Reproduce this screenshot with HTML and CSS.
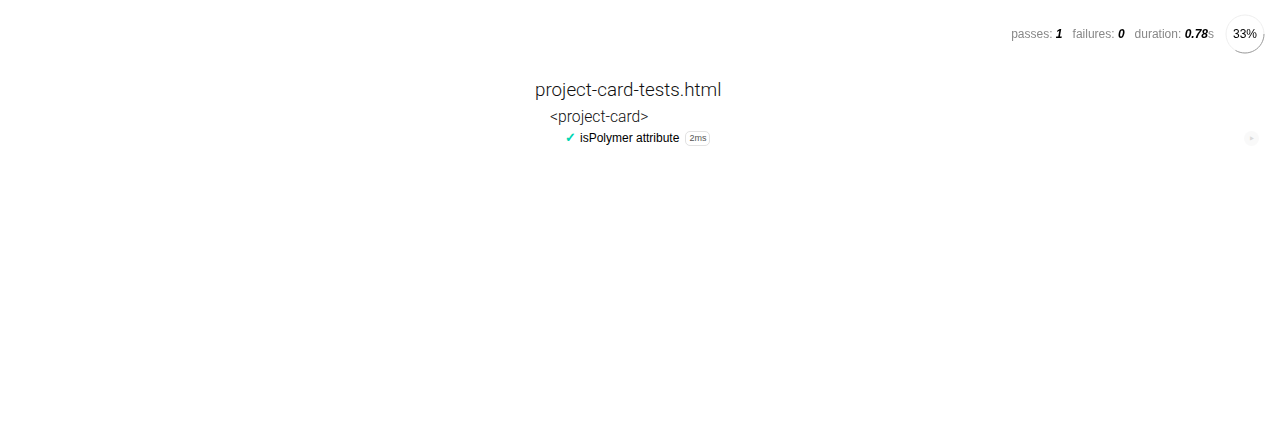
FILE: index.html
```html
<!DOCTYPE html>
<html>
<head>
<meta charset="utf-8">
<link rel="stylesheet" href="styles.css">
</head>
<body>
<div class="mocha">
  <ul class="stats">
    <li class="stat">passes: <em>1</em></li>
    <li class="stat">failures: <em>0</em></li>
    <li class="stat">duration: <em>0.78</em>s</li>
    <li class="progress">
      <svg width="40" height="40" viewBox="0 0 40 40">
        <circle cx="20" cy="20" r="19" fill="#fff" stroke="#eee" stroke-width="1"/>
        <path d="M39 20 A19 19 0 0 1 10.5 36.45" fill="none" stroke="#9f9f9f" stroke-width="1"/>
        <text x="20" y="24" text-anchor="middle" class="pct">33%</text>
      </svg>
    </li>
  </ul>
  <ul class="report">
    <li class="suite">
      <h1 class="title">project-card-tests.html</h1>
      <ul class="suites">
        <li class="suite sub">
          <h1 class="subtitle">&lt;project-card&gt;</h1>
          <ul class="tests">
            <li class="test">
              <h2 class="test-title"><span class="check">✓</span>isPolymer attribute <span class="duration">2ms</span><a class="replay">‣</a></h2>
            </li>
          </ul>
        </li>
      </ul>
    </li>
  </ul>
</div>
</body>
</html>
```
FILE: styles.css
```css
html, body {
  margin: 0;
  padding: 0;
  background: #fff;
}
.mocha {
  font: 20px/1.5 "Liberation Sans", Arial, sans-serif;
  color: #000;
  padding: 75px 20px 60px 535px;
}
.mocha ul {
  list-style: none;
  margin: 0;
  padding: 0;
}
.mocha h1, .mocha h2 {
  margin: 0;
}
.stats {
  position: fixed;
  top: 14px;
  right: 15px;
  font-size: 12px;
  color: #888;
  display: flex;
  align-items: flex-start;
}
.stats .stat {
  margin: 0 5px;
  padding-top: 11px;
  line-height: 18px;
}
.stats .stat:first-child {
  margin-left: 0;
}
.stats em {
  color: #000;
  font-style: italic;
  font-weight: bold;
}
.stats .progress {
  margin-left: 6px;
  width: 40px;
  height: 40px;
}
.progress svg {
  display: block;
}
.pct {
  font: 12px "Liberation Sans", Arial, sans-serif;
  fill: #000;
}
.title {
  font-family: Roboto, "Liberation Sans", sans-serif;
  font-size: 18.8px;
  font-weight: 300;
  color: #111;
  line-height: 30px;
}
.sub {
  margin-left: 15px;
}
.subtitle {
  font-family: Roboto, "Liberation Sans", sans-serif;
  font-size: 15.7px;
  font-weight: 300;
  line-height: 24px;
  color: #111;
}
.test {
  margin-left: 15px;
}
.test-title {
  position: relative;
  font-size: 12px;
  font-weight: normal;
  line-height: 18px;
  display: flex;
  align-items: center;
}
.check {
  color: #00d6b2;
  margin-right: 4px;
  font-size: 13px;
  font-weight: bold;
}
.duration {
  font-size: 9px;
  line-height: 11px;
  margin-left: 6px;
  padding: 1px 3px;
  color: #555;
  border: 1px solid #e2e2e2;
  border-radius: 5px;
}
.replay {
  position: absolute;
  top: 2px;
  right: 1px;
  width: 15px;
  height: 15px;
  line-height: 15px;
  text-align: center;
  background: #eee;
  border-radius: 15px;
  opacity: 0.3;
  color: #888;
  font-size: 15px;
}
```
